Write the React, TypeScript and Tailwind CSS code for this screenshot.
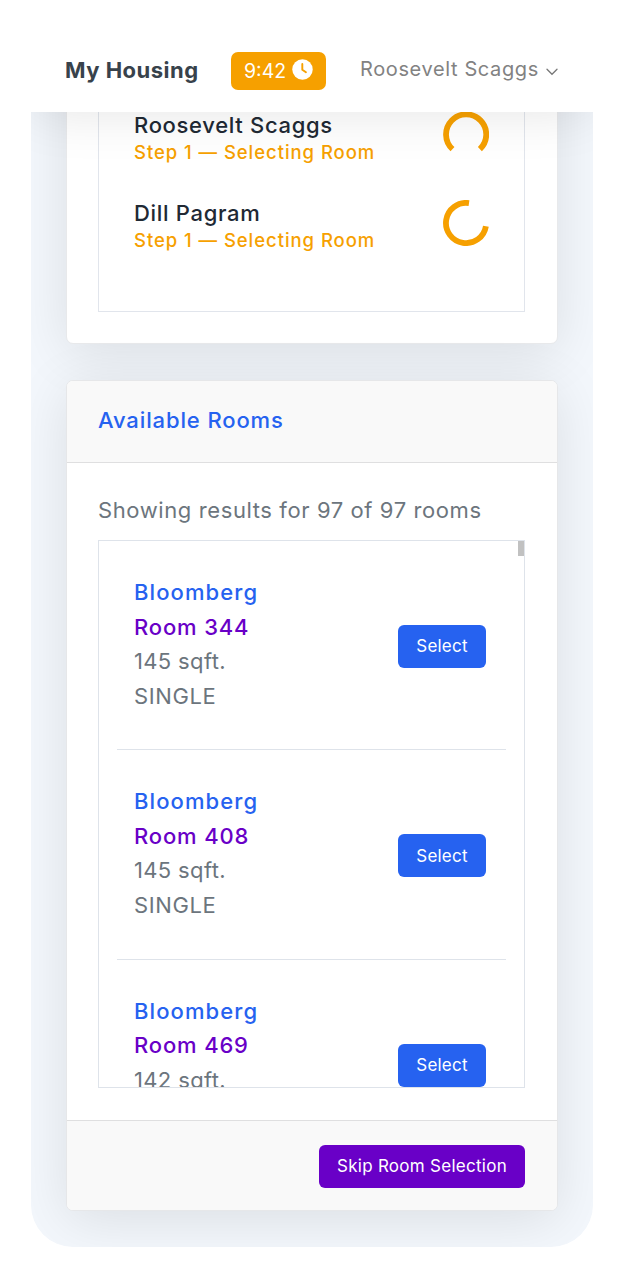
import type { ReactNode } from "react";

const rooms = [
  { building: "Bloomberg", room: "Room 344", size: "145 sqft.", type: "SINGLE" },
  { building: "Bloomberg", room: "Room 408", size: "145 sqft.", type: "SINGLE" },
  { building: "Bloomberg", room: "Room 469", size: "142 sqft.", type: "SINGLE" },
];

function ClockIcon() {
  return (
    <svg viewBox="0 0 22 22" className="ml-[5px] size-[21px] -translate-y-[1px]" fill="none">
      <circle cx="11" cy="11" r="10.7" fill="#fff" />
      <path d="M10.8 5.2v6l3.8 2.7" stroke="#f6a000" strokeWidth="2" strokeLinecap="round" strokeLinejoin="round" />
    </svg>
  );
}

function Spinner({ d }: { d: string }) {
  return (
    <svg viewBox="0 0 46 46" className="size-[46px] shrink-0" fill="none">
      <path d={d} stroke="#f6a000" strokeWidth="5.8" />
    </svg>
  );
}

function Person({ name, children }: { name: string; children: ReactNode }) {
  return (
    <div className="flex h-[88px] items-start justify-between pr-[35px] pl-[35px]">
      <div className="-mt-px whitespace-nowrap">
        <div className="text-[22px] leading-[28px] font-medium tracking-[0.68px] text-[#212934]">{name}</div>
        <div className="text-[18.5px] leading-[26px] font-medium tracking-[0.95px] text-[#f6a000]">Step 1 — Selecting Room</div>
      </div>
      {children}
    </div>
  );
}

export default function App() {
  return (
    <div className="h-[1274px] w-[625px] overflow-hidden bg-white pl-[31px] font-['Inter','Liberation_Sans',sans-serif]">
      <div className="flex h-[1247px] w-[562px] flex-col overflow-hidden rounded-b-[42px] bg-[#f3f7fc]">
        <header className="relative z-10 flex h-[112px] shrink-0 items-start bg-white pt-[52px] pl-[34px] shadow-[0_0_54px_rgba(0,0,0,0.11)]">
          <h1 className="w-[166px] text-[22px] leading-[36px] font-bold tracking-[0.5px] whitespace-nowrap text-[#38424b]">My Housing</h1>
          <div className="flex h-[37.5px] w-[95px] items-center rounded-[7px] bg-[#f6a000] pl-[13px] text-[19.5px] text-white">
            <span className="w-[43px] pt-[2px] whitespace-nowrap">9:42</span>
            <ClockIcon />
          </div>
          <div className="ml-[34px] flex items-center text-[20px] leading-[34px] whitespace-nowrap text-[#828282]">
            <span className="w-[186px] tracking-[0.62px]">Roosevelt Scaggs</span>
            <svg viewBox="0 0 12 8" className="mt-[5px] h-[8px] w-[12px]" fill="none">
              <path d="M1 1.3l5 5 5-5" stroke="#777" strokeWidth="1.3" strokeLinecap="round" />
            </svg>
          </div>
        </header>

        <main className="flex flex-col px-[35px]">
          <section className="-mt-[100px] h-[332px] shrink-0 rounded-[7px] border border-[#e8e9eb] bg-white pr-[32px] pb-[31px] pl-[31px] shadow-[0_9px_54px_rgba(0,0,0,0.1)]">
            <div className="h-full border border-[#e1e5ec] pt-[98px]">
              <Person name="Roosevelt Scaggs">
                <Spinner d="M9.5 37.2A20.1 20.1 0 1 1 36.9 37.1" />
              </Person>
              <Person name="Dill Pagram">
                <Spinner d="M26 3.1A20.1 20.1 0 1 0 42.9 26.2" />
              </Person>
            </div>
          </section>

          <section className="mt-[36px] flex h-[831px] shrink-0 flex-col rounded-[7px] border border-[#e6e7e9] bg-white shadow-[0_9px_54px_rgba(0,0,0,0.1)]">
            <div className="h-[82px] shrink-0 rounded-t-[6px] border-b border-[#dfdfe0] bg-[#f9f9f9] pt-[21px] pl-[31px]">
              <h2 className="text-[22px] leading-[36px] font-medium tracking-[0.88px] text-[#2662f0]">Available Rooms</h2>
            </div>
            <div className="grow pt-[29px] pr-[32px] pl-[31px]">
              <p className="text-[22px] leading-[36px] tracking-[0.6px] whitespace-nowrap text-[#6c757d]">Showing results for 97 of 97 rooms</p>
              <div className="mt-[12px] flex h-[548px] overflow-hidden border border-[#dee3ea] pl-[18px]">
                <div className="w-[389px] shrink-0">
                  {rooms.map((r) => (
                    <div key={r.room} className="flex h-[209.3px] items-center justify-between border-b-[1.5px] border-[#dee3ea] pr-[20px] pl-[17px]">
                      <div className="-mt-[2px] text-[22px] leading-[34.6px] whitespace-nowrap text-[#6c757d]">
                        <div className="font-medium tracking-[1.1px] text-[#2662f0]">{r.building}</div>
                        <div className="font-medium tracking-[0.84px] text-[#6900c7]">{r.room}</div>
                        <div className="tracking-[0.35px]">{r.size}</div>
                        <div className="tracking-[0.6px]">{r.type}</div>
                      </div>
                      <button className="mt-[3px] h-[43px] w-[88px] rounded-[6px] bg-[#2662f0] pt-px text-[17px] tracking-[0.2px] text-white">Select</button>
                    </div>
                  ))}
                </div>
                <div className="ml-auto h-[15px] w-[6px] shrink-0 bg-[#c1c1c1]" />
              </div>
            </div>
            <div className="flex h-[90px] shrink-0 justify-end rounded-b-[6px] border-t border-[#dfdfe0] bg-[#f9f9f9] pt-[23.5px] pr-[32px]">
              <button className="h-[43px] w-[206px] rounded-[6px] bg-[#6900c7] pt-px text-[17px] tracking-[0.28px] whitespace-nowrap text-white">Skip Room Selection</button>
            </div>
          </section>
        </main>
      </div>
    </div>
  );
}
